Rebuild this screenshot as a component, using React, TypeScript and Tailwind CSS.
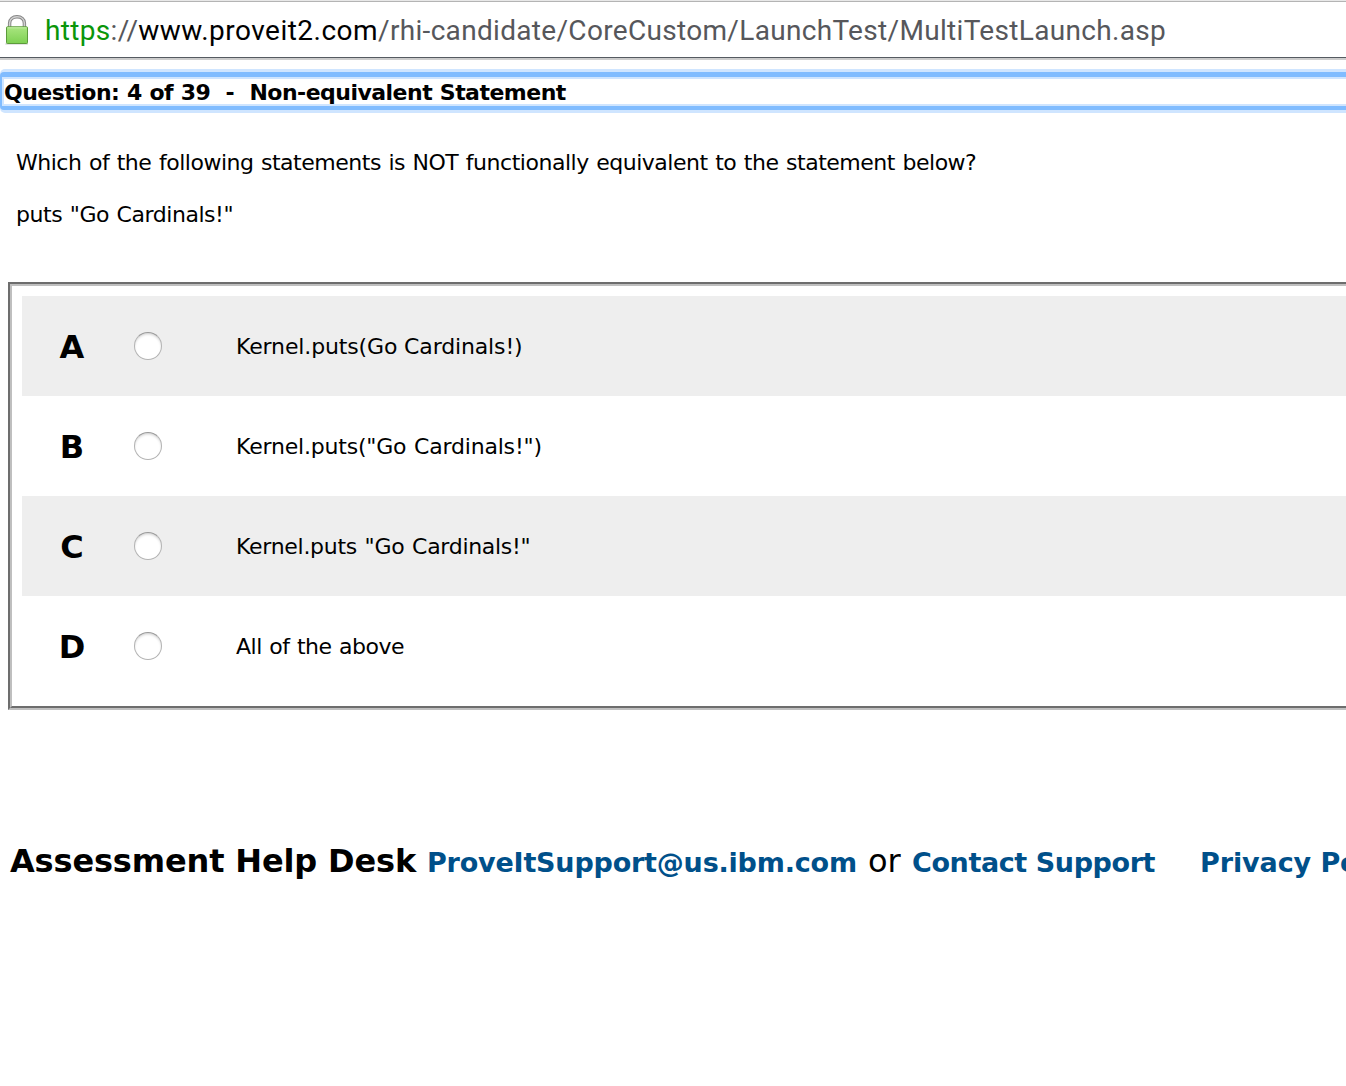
type Option = { letter: string; text: string; row: string; spacing: string };

const options: Option[] = [
  { letter: "A", text: "Kernel.puts(Go Cardinals!)", row: "bg-[#eeeeee]", spacing: "tracking-[-0.14px]" },
  { letter: "B", text: 'Kernel.puts("Go Cardinals!")', row: "bg-white", spacing: "tracking-[-0.2px] [word-spacing:1px]" },
  { letter: "C", text: 'Kernel.puts "Go Cardinals!"', row: "bg-[#eeeeee]", spacing: "tracking-[-0.29px] [word-spacing:1px]" },
  { letter: "D", text: "All of the above", row: "bg-white", spacing: "tracking-[-0.5px] [word-spacing:1px]" },
];

function LockIcon() {
  return (
    <svg width="28" height="34" viewBox="0 0 28 34" className="shrink-0">
      <defs>
        <linearGradient id="lockBody" x1="0" y1="0" x2="0" y2="1">
          <stop offset="0" stopColor="#a9e580" />
          <stop offset="1" stopColor="#7ed052" />
        </linearGradient>
      </defs>
      <rect x="5" y="29" width="24" height="2" rx="1" fill="#e4e4e4" />
      <path d="M9.6 13V9.2C9.6 5.3 12.7 2.8 17 2.8s7.4 2.5 7.4 6.4V13" fill="none" stroke="#858585" strokeWidth="3.4" />
      <path d="M9.6 13V9.2C9.6 5.3 12.7 2.8 17 2.8s7.4 2.5 7.4 6.4V13" fill="none" stroke="#d2d2d2" strokeWidth="1.5" />
      <rect x="6.5" y="12.8" width="21" height="16.7" rx="0.8" fill="url(#lockBody)" stroke="#5c9b3b" />
      <path d="M7.5 13.8h19" stroke="#c3f0a5" strokeWidth="1" />
    </svg>
  );
}

function AddressBar() {
  return (
    <header className="flex h-[60px] items-start border-t border-[#e8e8e8]">
      <div className="flex h-[59px] w-full items-start border-t border-[#b4b4b4] pt-3">
        <LockIcon />
        <div className="ml-[17px] whitespace-nowrap font-['Roboto',sans-serif] text-[28px] leading-[33px] tracking-[0.32px] text-[#56575b]">
          <span className="text-[#0a960a]">https</span>://<span className="tracking-[0.48px] text-black">www.proveit2.com</span>
          /rhi-candidate/CoreCustom/LaunchTest/MultiTestLaunch.asp
        </div>
      </div>
    </header>
  );
}

export default function App() {
  return (
    <div className="h-[1086px] w-[1346px] overflow-hidden bg-white font-['DejaVu_Sans',sans-serif] text-[22px] leading-6 text-black">
      <div className="h-[60px] border-b-2 border-[#cccccc]">
        <div className="h-[58px] overflow-hidden border-b border-[#555b61]">
          <AddressBar />
        </div>
      </div>

      <div className="mt-[9px] h-[44px] w-[1360px] rounded-[5px] bg-[#cfe5ff] py-[3px]">
        <div className="h-[38px] rounded-[4px] bg-[#80bcff] pb-1 pl-[2px] pt-[5px]">
          <h1 className="h-[29px] whitespace-pre border-2 border-[#cfe5ff] bg-white text-[22px] font-bold leading-[28px] tracking-[-0.52px] [word-spacing:0.5px]">
            {"Question: 4 of 39  -  Non-equivalent Statement"}
          </h1>
        </div>
      </div>

      <main>
        <div className="flex flex-col gap-7 whitespace-nowrap pl-4 pt-[38px]">
          <p className="tracking-[-0.48px] [word-spacing:1px]">
            Which of the following statements is NOT functionally equivalent to the statement below?
          </p>
          <p className="tracking-[-0.45px] [word-spacing:1px]">puts "Go Cardinals!"</p>
        </div>

        <div className="ml-2 mt-[55px] h-[428px] w-[1360px] border-2 border-[#6d6d6d] border-b-[#bfbfbf]">
          <div className="h-[424px] border-2 border-[#bfbfbf] border-b-[#6d6d6d] pl-[10px] pt-[10px]">
            {options.map(({ letter, text, row, spacing }) => (
              <label key={letter} className={`flex h-[100px] items-center ${row}`}>
                <span className="w-[100px] pt-[1px] text-center text-[32px] font-bold leading-10">{letter}</span>
                <input
                  type="radio"
                  name="answer"
                  className="ml-3 h-7 w-7 appearance-none rounded-full border border-[#b3b3b3] border-t-[#999999] bg-white shadow-[inset_0_2px_3px_-1px_#c8c8c8]"
                />
                <span className={`ml-[74px] whitespace-nowrap pt-[2px] ${spacing}`}>{text}</span>
              </label>
            ))}
          </div>
        </div>
      </main>

      <footer className="ml-[10px] mt-[131px] flex items-baseline whitespace-nowrap text-[27px] font-bold leading-10 text-[#00508a]">
        <span className="w-[417px] shrink-0 text-[32px] tracking-[-0.15px] text-black">Assessment Help Desk</span>
        <a className="w-[441px] shrink-0 tracking-[-0.2px]">ProveItSupport@us.ibm.com</a>
        <span className="w-[44px] shrink-0 text-[32px] font-normal text-black">or</span>
        <a className="w-[288px] shrink-0 tracking-[-0.4px]">Contact Support</a>
        <a className="shrink-0 tracking-[-0.1px]">Privacy Policy</a>
      </footer>
    </div>
  );
}
